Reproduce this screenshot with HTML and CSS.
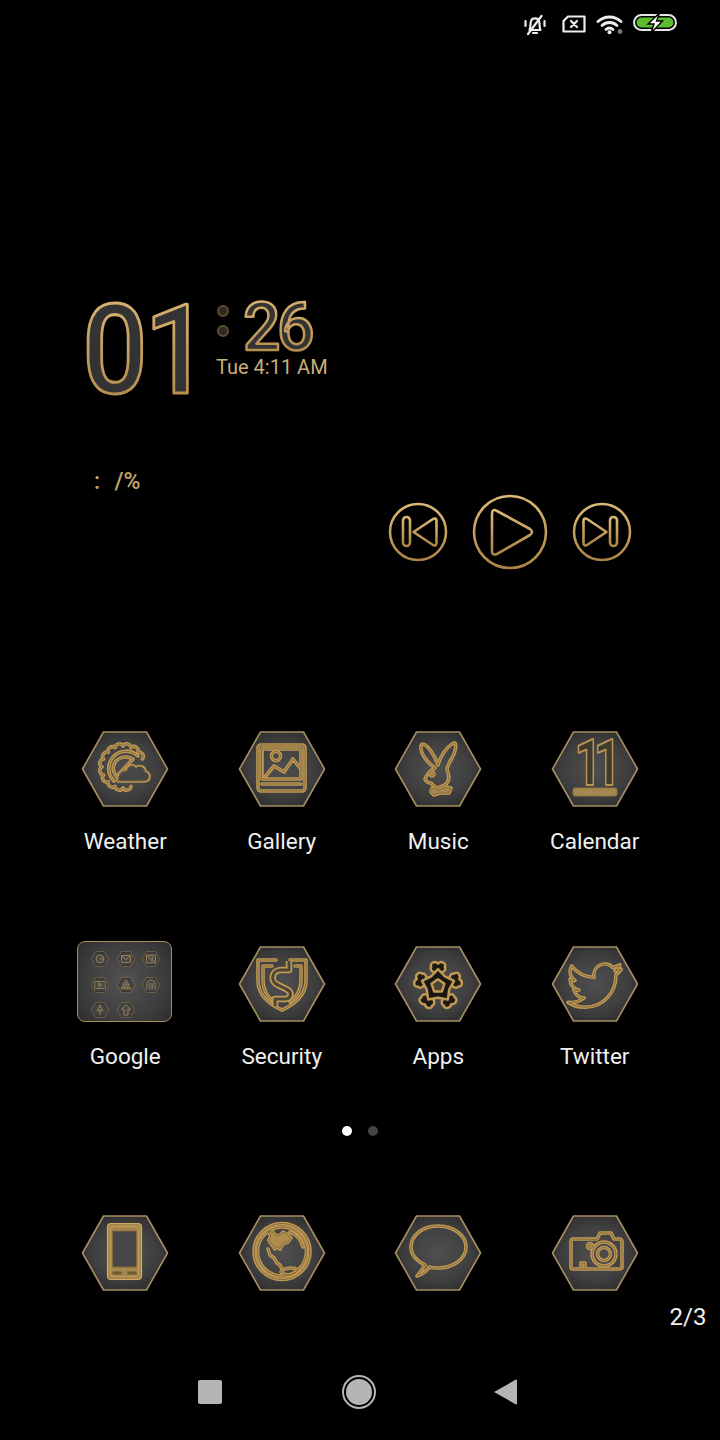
FILE: index.html
```html
<!DOCTYPE html>
<html lang="en">
<head>
<meta charset="utf-8">
<title>Home screen</title>
<link rel="stylesheet" href="styles.css">
</head>
<body>
<svg class="defs" aria-hidden="true">
  <defs>
    <radialGradient id="hexfill" cx="50%" cy="50%" r="60%">
      <stop offset="0" stop-color="#4f4f4f"/>
      <stop offset="0.6" stop-color="#404040"/>
      <stop offset="1" stop-color="#2b2b2b"/>
    </radialGradient>
    <linearGradient id="gold" x1="0" y1="0" x2="0" y2="1">
      <stop offset="0" stop-color="#dcb877"/>
      <stop offset="1" stop-color="#ad8445"/>
    </linearGradient>
    <polygon id="hx" points="1.500,39 22.500,2 65.500,2 86.500,39 65.500,76 22.500,76" fill="url(#hexfill)"/>
    <g id="weather">
      <path d="M50 56.400A4.300 4.300 0 0 1 42 58A4.300 4.300 0 0 1 34 56.400A4.300 4.300 0 0 1 27.200 51.900A4.300 4.300 0 0 1 22.600 45A4.300 4.300 0 0 1 21 37A4.300 4.300 0 0 1 22.600 29A4.300 4.300 0 0 1 27.200 22.200A4.300 4.300 0 0 1 34 17.600A4.300 4.300 0 0 1 42 16A4.300 4.300 0 0 1 50 17.600A4.300 4.300 0 0 1 56.900 22.200A4.300 4.300 0 0 1 61.400 29"/>
      <path d="M33 51A16.500 16.500 0 0 1 57 26"/>
      <path d="M36 47C28 38 34 27 45 27C48 27 50 28 52 29L38 44"/>
      <path d="M37 51H63C69 51 70 43 64 42C64 37 58 35 55 38C52 34 46 36 46 41C41 40 37 45 37 51Z" fill="#464646"/>
    </g>
    <g id="gallery">
      <rect x="20" y="15" width="47" height="46" rx="3"/>
      <path d="M24 19H63V49H24Z"/>
      <path d="M24 54H63"/>
      <circle cx="38" cy="26" r="4.500"/>
      <path d="M27 47L36 36L46 42L55 29L62 38"/>
    </g>
    <g id="bunny">
      <path d="M41 38C34 33 26 24 27 16C28 12 33 15 37 21C41 27 43 32 44 35C46 27 52 17 60 13C63 12 62 22 58 28C55 33 53 37 53 40C56 46 55 52 51 55L44 58L40 56L37 53C34 53 31 51 31 49C32 47 33 42 41 38Z"/>
      <circle cx="38" cy="44" r="1.800"/>
      <path d="M38 58L45 60L52 57L57 58L55 63L46 63L40 65L37 62Z" fill="#a5874f"/>
    </g>
    <g id="shield">
      <path d="M38 15H20V36C20 50 32 60 44 65C56 60 68 50 68 36V15H52"/>
      <path d="M34 21H25V36C25 46 31 53 36 57"/>
      <path d="M57 21H63V36C63 46 57 53 52 57"/>
    </g>
    <path id="ess" d="M51 16V25H43C33 25 32 37 40 40L48 44C55 47 53 54 47 54H37V61"/>
    <g id="lobe">
      <path d="M41 28C37 27 37 24 38 23C36 20 41 17 44 20C47 17 52 20 50 23C51 24 51 27 47 28Z" fill="#1d1a14"/>
    </g>
    <g id="flower" transform="translate(44 41) scale(1.120) translate(-44 -40)">
      <use href="#lobe"/>
      <use href="#lobe" transform="rotate(72 44 40)"/>
      <use href="#lobe" transform="rotate(144 44 40)"/>
      <use href="#lobe" transform="rotate(216 44 40)"/>
      <use href="#lobe" transform="rotate(288 44 40)"/>
      <polygon points="44,25 50.200,31.500 58.300,35.400 54,43.200 52.800,52.100 44,50.500 35.200,52.100 34,43.200 29.700,35.400 37.800,31.500" fill="#181612"/>
      <polygon points="44,34 49.700,38.100 47.500,44.900 40.500,44.900 38.300,38.100" fill="#4a4335"/>
    </g>
    <g id="bird">
      <path transform="translate(17 14) scale(2.22)" vector-effect="non-scaling-stroke" d="M23.953 4.57a10 10 0 01-2.825.775 4.958 4.958 0 002.163-2.723c-.951.555-2.005.959-3.127 1.184a4.92 4.92 0 00-8.384 4.482C7.69 8.095 4.067 6.13 1.64 3.162a4.822 4.822 0 00-.666 2.475c0 1.71.87 3.213 2.188 4.096a4.904 4.904 0 01-2.228-.616v.06a4.923 4.923 0 003.946 4.827 4.996 4.996 0 01-2.212.085 4.936 4.936 0 004.604 3.417 9.867 9.867 0 01-6.102 2.105c-.39 0-.779-.023-1.17-.067a13.995 13.995 0 007.557 2.209c9.053 0 13.998-7.496 13.998-13.985 0-.21 0-.42-.015-.63A9.935 9.935 0 0024 4.59z"/>
    </g>
    <g id="phone">
      <rect x="26.500" y="9.500" width="34" height="56" rx="3.500" fill="#a5864c" stroke="#d0ab66" stroke-width="1.200"/>
      <rect x="29.500" y="12.500" width="28" height="50" rx="2" fill="none" stroke="#c9a45f" stroke-width="0.800"/>
      <rect x="32" y="17" width="23.500" height="36" fill="#464646" stroke="#806738" stroke-width="1"/>
      <rect x="31.500" y="57.500" width="9" height="3" fill="#6e5a34" stroke="none"/>
      <rect x="46.500" y="57.500" width="9" height="3" fill="#6e5a34" stroke="none"/>
    </g>
    <g id="globe">
      <circle cx="44" cy="37.500" r="28"/>
      <circle cx="44" cy="37.500" r="24.500"/>
      <path d="M30 18L33 21L31 26L34 31L37 35L39 32L42 35L44 31L47 29L50 28L53 24L49 20L45 18L43 21L38 22L35 18Z" fill="#b08c4c"/>
      <path d="M30 35L32 41L36 44L39 49L42 51L44 55"/>
      <path d="M43 58C47 53 56 53 60 56C57 61 48 63 43 58Z"/>
      <path d="M52 18C58 20 63 26 65 33"/>
    </g>
    <path id="speech" d="M31 51C23 47 17 41 17 33C17 21 29 12 44 12C59 12 72 21 72 33C72 45 59 54 44 54C41 54 38 54 35 53C33 57 29 60 23 62C26 59 28 55 31 51Z"/>
    <g id="camera">
      <path d="M46 25L49 19H60L63 25H68Q71 25 71 28V53Q71 55 68 55H22Q20 55 20 53V28Q20 25 22 25Z"/>
      <circle cx="53" cy="40" r="12"/>
      <circle cx="53" cy="40" r="6.500"/>
      <circle cx="39" cy="32" r="2.500"/>
      <path d="M30 55V49H34V55"/>
    </g>
  </defs>
</svg>

<div class="screen">
  <header class="status">
    <svg class="st st-bell" viewBox="0 0 22 20"><path d="M5.500 15C7 12 6 9 7 6C8 2.500 14 2.500 15 6C16 9 15 12 16.500 15H5.500Z" class="st-line"/><path d="M9 18H13" class="st-line"/><path d="M1.500 6V11M20.500 6V11" class="st-line"/><path d="M17.500 1L4 19" class="st-line"/></svg>
    <svg class="st st-sim" viewBox="0 0 24 18"><path d="M6 1.500H22.500V16.500H1.500V6Z" class="st-line"/><path d="M9 6L15 12M15 6L9 12" class="st-line"/></svg>
    <svg class="st st-wifi" viewBox="0 0 27 19"><path d="M2 6.500C9 0.500 18 0.500 25 6.500M6 10.500C10 6.500 17 6.500 21 10.500M10 14.500C12 12.500 15 12.500 17 14.500" class="st-line st-thick"/><circle cx="13.500" cy="17.300" r="2" fill="#eee"/><circle cx="24" cy="16.500" r="2.400" fill="#777"/></svg>
    <svg class="st st-batt" viewBox="0 0 44 17"><rect x="1" y="1" width="42" height="15" rx="7.500" fill="#000" stroke="#e6e6e6" stroke-width="2"/><rect x="3.500" y="3.500" width="37" height="10" rx="5" fill="#5cbb2e"/><path d="M26.500 -1L15 10H21L18 19L29.500 7H23.500Z" fill="#fff" stroke="#000" stroke-width="1.400"/></svg>
  </header>

  <section class="clock">
    <svg class="hour" viewBox="0 0 138 100"><text class="big" transform="scale(0.92 1)" x="4.600 72" y="95">01</text></svg>
    <div class="clock-side">
      <div class="clock-top">
        <div class="colon"><span class="colon-dot"></span><span class="colon-dot"></span></div>
        <svg class="minute" viewBox="0 0 75 56"><text class="mid" x="-2 32" y="52">26</text></svg>
      </div>
      <div class="date">Tue 4:11 AM</div>
    </div>
  </section>

  <div class="meter">:  /%</div>

  <section class="media">
    <svg class="ctrl" viewBox="0 0 60 60"><circle cx="30" cy="30" r="28"/><rect x="15" y="15" width="7" height="29" rx="3.500"/><path d="M25.500 30L45 17Q48.500 15.500 48.500 19V41Q48.500 44.500 45 43Z"/></svg>
    <svg class="ctrl ctrl-play" viewBox="0 0 76 76"><circle cx="38" cy="38" r="36"/><path d="M20 20Q20 14 25 17L58 35Q62 38 58 41L25 60Q20 62 20 57Z"/></svg>
    <svg class="ctrl" viewBox="0 0 60 60"><circle cx="30" cy="30" r="28"/><rect x="38" y="15" width="7" height="29" rx="3.500"/><path d="M34.500 30L15 17Q11.500 15.500 11.500 19V41Q11.500 44.500 15 43Z"/></svg>
  </section>

  <section class="grid">
    <div class="app"><div class="ico"><svg class="hex" viewBox="0 0 88 78"><use class="hb" href="#hx"/><use class="o" href="#weather"/><use class="i" href="#weather"/></svg></div><span class="label">Weather</span></div>
    <div class="app"><div class="ico"><svg class="hex" viewBox="0 0 88 78"><use class="hb" href="#hx"/><use class="o" href="#gallery"/><use class="i" href="#gallery"/></svg></div><span class="label">Gallery</span></div>
    <div class="app"><div class="ico"><svg class="hex" viewBox="0 0 88 78"><use class="hb" href="#hx"/><use class="o" href="#bunny"/><use class="i" href="#bunny"/></svg></div><span class="label">Music</span></div>
    <div class="app"><div class="ico"><svg class="hex" viewBox="0 0 88 78"><use class="hb" href="#hx"/><text class="cal-num" transform="scale(0.75 1)" x="31.300 57" y="55">11</text><rect class="cal-bar" x="22" y="58" width="44" height="8" rx="2"/></svg></div><span class="label">Calendar</span></div>

    <div class="app"><div class="ico"><div class="folder">
      <svg class="mini" viewBox="0 0 88 78"><use class="hb" href="#hx"/><circle class="m" cx="44" cy="39" r="19"/><path class="m" d="M44 39H62"/></svg>
      <svg class="mini" viewBox="0 0 88 78"><use class="hb" href="#hx"/><rect class="m" x="22" y="22" width="44" height="34"/><path class="m" d="M22 22L44 42L66 22"/></svg>
      <svg class="mini" viewBox="0 0 88 78"><use class="hb" href="#hx"/><path class="m" d="M22 20H66V58H22ZM22 20L66 58M44 20C60 30 50 45 44 50"/></svg>
      <svg class="mini" viewBox="0 0 88 78"><use class="hb" href="#hx"/><rect class="m" x="18" y="22" width="52" height="34" rx="6"/><path class="m" d="M38 30L52 39L38 48Z"/></svg>
      <svg class="mini" viewBox="0 0 88 78"><use class="hb" href="#hx"/><path class="m" d="M44 14L68 58H20ZM44 32L32 52H56Z"/></svg>
      <svg class="mini" viewBox="0 0 88 78"><use class="hb" href="#hx"/><path class="m" d="M24 62V34C24 8 64 8 64 34V62M38 62V30M50 62V30"/></svg>
      <svg class="mini" viewBox="0 0 88 78"><use class="hb" href="#hx"/><path class="m" d="M44 14L32 42H44V64M44 14L56 42H44"/></svg>
      <svg class="mini" viewBox="0 0 88 78"><use class="hb" href="#hx"/><path class="m" d="M44 12L66 36H54V64H34V36H22Z"/></svg>
    </div></div><span class="label">Google</span></div>
    <div class="app"><div class="ico"><svg class="hex" viewBox="0 0 88 78"><use class="hb" href="#hx"/><use class="o" href="#shield"/><use class="i" href="#shield"/><use class="o-wide" href="#ess"/><use class="i-wide" href="#ess"/></svg></div><span class="label">Security</span></div>
    <div class="app"><div class="ico"><svg class="hex" viewBox="0 0 88 78"><use class="hb" href="#hx"/><use class="o thin" href="#flower"/></svg></div><span class="label">Apps</span></div>
    <div class="app"><div class="ico"><svg class="hex" viewBox="0 0 88 78"><use class="hb" href="#hx"/><use class="o" href="#bird"/><use class="i" href="#bird"/></svg></div><span class="label">Twitter</span></div>
  </section>

  <div class="pager"><span class="pager-dot is-active"></span><span class="pager-dot"></span></div>

  <section class="dock">
    <div class="ico"><svg class="hex" viewBox="0 0 88 78"><use class="hb" href="#hx"/><use class="o" href="#phone"/></svg></div>
    <div class="ico"><svg class="hex" viewBox="0 0 88 78"><use class="hb" href="#hx"/><use class="o" href="#globe"/><use class="i" href="#globe"/></svg></div>
    <div class="ico"><svg class="hex" viewBox="0 0 88 78"><use class="hb" href="#hx"/><use class="o" href="#speech"/><use class="i" href="#speech"/></svg></div>
    <div class="ico"><svg class="hex" viewBox="0 0 88 78"><use class="hb" href="#hx"/><use class="o" href="#camera"/><use class="i" href="#camera"/></svg></div>
  </section>

  <div class="counter">2/3</div>

  <nav class="navbar">
    <span class="nav-square"></span>
    <span class="nav-home"></span>
    <svg class="nav-back" viewBox="0 0 23 26"><path d="M0 13L22 0.500Q23 0.500 23 1.500V24.500Q23 25.500 22 25.500Z"/></svg>
  </nav>
</div>
</body>
</html>
```
FILE: styles.css
```css
* { box-sizing: border-box; }
html, body { margin: 0; padding: 0; background: #000; }
body { font-family: Roboto, "Liberation Sans", sans-serif; }
.defs { position: absolute; width: 0; height: 0; }
.screen { position: relative; width: 720px; height: 1440px; overflow: hidden; display: flex; flex-direction: column; background: #000; }

/* status bar */
.status { height: 46px; padding: 14px 43px 0 0; display: flex; justify-content: flex-end; align-items: flex-start; }
.st { display: block; flex: none; overflow: visible; }
.st-bell { width: 22px; height: 20px; margin-top: 1px; margin-right: 16px; }
.st-sim { width: 24px; height: 18px; margin-top: 1px; margin-right: 10px; }
.st-wifi { width: 27px; height: 19px; margin-top: 1px; margin-right: 10px; }
.st-batt { width: 44px; height: 17px; }
.st-line { fill: none; stroke: #eeeeee; stroke-width: 2.200; stroke-linecap: round; stroke-linejoin: round; }
.st-thick { stroke-width: 2.800; }

/* clock */
.clock { margin-top: 252px; padding-left: 78px; height: 100px; display: flex; align-items: flex-start; }
.hour { width: 138px; height: 100px; display: block; overflow: visible; flex: none; }
.big { font-size: 125px; font-weight: 500; fill: #333; stroke: url(#gold); stroke-width: 3; stroke-linejoin: round; }
.clock-side { display: flex; flex-direction: column; }
.clock-top { display: flex; height: 56px; }
.colon { width: 29px; padding-left: 1px; padding-top: 7px; display: flex; flex-direction: column; gap: 8px; }
.colon-dot { display: block; width: 12px; height: 12px; border-radius: 50%; background: #2e2a22; border: 2.500px solid #5d4c2e; }
.minute { width: 75px; height: 56px; display: block; overflow: visible; }
.mid { font-size: 66px; font-weight: 500; fill: #333; stroke: url(#gold); stroke-width: 2.500; stroke-linejoin: round; }
.date { font-size: 20px; line-height: 26px; color: #c9ae7a; white-space: nowrap; }

.meter { margin-top: 72px; padding-left: 94px; height: 24px; font-size: 23px; font-weight: 500; line-height: 24px; word-spacing: 1.500px; color: #c4a569; white-space: pre; }

/* media */
.media { height: 76px; margin-top: 0; padding-left: 388px; display: flex; align-items: center; gap: 24px; }
.ctrl { width: 60px; height: 60px; display: block; fill: none; stroke: url(#gold); stroke-width: 2.600; stroke-linejoin: round; }
.ctrl-play { width: 76px; height: 76px; }

/* app grid */
.grid { margin-top: 160px; padding: 0 47px; display: grid; grid-template-columns: repeat(4, 1fr); row-gap: 89px; }
.app { display: flex; flex-direction: column; align-items: center; }
.ico { height: 78px; display: flex; justify-content: center; align-items: flex-start; }
.hex { width: 88px; height: 78px; display: block; }
.hb { stroke: #a68f60; stroke-width: 1.600; stroke-linejoin: round; }
.o { fill: none; stroke: #c09a55; stroke-width: 3.600; stroke-linejoin: round; stroke-linecap: round; }
.o.thin { stroke-width: 2.200; }
.i { fill: none; stroke: #85693a; stroke-width: 1; stroke-linejoin: round; stroke-linecap: round; }
.o-wide { fill: none; stroke: #c09a55; stroke-width: 6.500; stroke-linejoin: round; }
.i-wide { fill: none; stroke: #4d4636; stroke-width: 3; stroke-linejoin: round; }
.cal-num { font-family: Roboto, sans-serif; font-size: 64px; font-weight: 700; fill: #3e3a31; stroke: #b8924f; stroke-width: 2; stroke-linejoin: round; }
.cal-bar { fill: #a5874f; stroke: #8d7342; stroke-width: 1; }
.label { margin-top: 18px; font-size: 22.500px; line-height: 30px; color: #f0f0f0; white-space: nowrap; }

/* folder */
.folder { margin: -4px 0 0 -1px; width: 95px; height: 81px; padding: 9px 0 0 13px; border: 1.800px solid #a68c58; border-radius: 8px; background: radial-gradient(circle, #525252, #3d3d3d 65%, #2d2d2d); display: grid; grid-template-columns: repeat(3, 25.500px); grid-auto-rows: 25.500px; }
.mini { width: 18px; height: 16px; display: block; }
.mini .hb { stroke: #8c7a52; stroke-width: 3; }
.m { fill: none; stroke: #a88b54; stroke-width: 4; stroke-linejoin: round; }

/* pager */
.pager { margin-top: 55px; height: 10px; padding-left: 342px; display: flex; gap: 16px; }
.pager-dot { width: 10px; height: 10px; border-radius: 50%; background: #444; }
.is-active { background: #fff; }

/* dock */
.dock { margin-top: 78px; padding: 0 47px; display: grid; grid-template-columns: repeat(4, 1fr); }
.dock .ico { height: 78px; }

.counter { position: absolute; top: 1303px; right: 13.500px; font-size: 24px; line-height: 28px; color: #f0f0f0; }

/* nav bar */
.navbar { margin-top: 83px; height: 34px; padding-left: 198px; display: flex; align-items: center; gap: 119px; }
.nav-square { width: 24px; height: 24px; background: #b5b5b5; border-radius: 2px; }
.nav-home { margin-left: 1px; width: 34px; height: 34px; border-radius: 50%; border: 2.500px solid #b5b5b5; padding: 2px; background: #b5b5b5 content-box; }
.nav-back { margin-left: -1px; width: 23px; height: 26px; fill: #b5b5b5; display: block; }
```
